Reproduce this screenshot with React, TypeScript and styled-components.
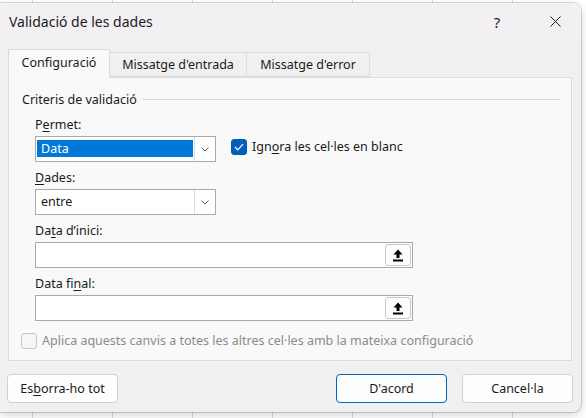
import React from "react";
import styled, { createGlobalStyle } from "styled-components";

const GlobalStyle = createGlobalStyle`
  html, body {
    margin: 0;
    padding: 0;
  }

  body {
    width: 586px;
    height: 418px;
    overflow: hidden;
    background-color: #ffffff;
    background-image: repeating-linear-gradient(
      90deg,
      transparent 0,
      transparent 32px,
      #dcdcdc 32px,
      #dcdcdc 33px,
      transparent 33px,
      transparent 80px
    );
    font-family: "Noto Sans", "Open Sans", sans-serif;
    font-size: 12.5px;
    color: #1a1a1a;
  }
`;

const Dialog = styled.div`
  margin-top: 3px;
  width: 581px;
  height: 409px;
  display: flex;
  flex-direction: column;
  background: #f0f0f0;
  border-radius: 0 8px 8px 0;
  box-shadow: 0 0 0 1px rgba(0, 0, 0, 0.14), 0 3px 10px rgba(0, 0, 0, 0.18);
  overflow: hidden;
`;

const TitleBar = styled.div`
  height: 37px;
  flex-shrink: 0;
  display: flex;
  align-items: center;
  padding-left: 9px;
  background: #f3f0f3;
`;

const Title = styled.div`
  flex: 1;
  font-size: 14px;
  color: #1b1b1b;
`;

const CaptionButton = styled.div<{ $gap?: number }>`
  width: 46px;
  height: 37px;
  margin-right: ${(p) => p.$gap ?? 0}px;
  display: flex;
  align-items: center;
  justify-content: center;
  font-size: 15px;
  color: #1b1b1b;
`;

const Body = styled.div`
  flex: 1;
  display: flex;
  flex-direction: column;
  padding: 9px 9px 0 8px;
`;

const TabRow = styled.div`
  display: flex;
  align-items: flex-end;
  height: 28px;
`;

const Tab = styled.div<{ $active?: boolean; $width: number }>`
  position: relative;
  z-index: ${(p) => (p.$active ? 1 : 0)};
  width: ${(p) => p.$width}px;
  height: ${(p) => (p.$active ? 29 : 25)}px;
  margin-bottom: ${(p) => (p.$active ? -1 : 0)}px;
  margin-left: ${(p) => (p.$active ? 0 : -1)}px;
  box-sizing: border-box;
  display: flex;
  align-items: center;
  justify-content: center;
  padding-bottom: ${(p) => (p.$active ? 3 : 0)}px;
  background: ${(p) => (p.$active ? "#f9f9f9" : "#f0f0f0")};
  border: 1px solid #dcdcdc;
  border-bottom: ${(p) => (p.$active ? "none" : "1px solid #dcdcdc")};
  white-space: nowrap;

  &:first-child {
    margin-left: 0;
  }
`;

const Panel = styled.div`
  height: 284px;
  box-sizing: border-box;
  display: flex;
  flex-direction: column;
  background: #f9f9f9;
  border: 1px solid #dcdcdc;
`;

const GroupHeader = styled.div`
  display: flex;
  align-items: center;
  height: 16px;
  margin: 13px 11px 0 13px;
`;

const GroupRule = styled.div`
  flex: 1;
  height: 1px;
  margin-left: 6px;
  background: #dcdcdc;
`;

const Fields = styled.div`
  display: flex;
  flex-direction: column;
  gap: 8px;
  padding-left: 26px;
  margin-top: 10px;
`;

const Field = styled.div`
  display: flex;
  flex-direction: column;
  gap: 3px;
`;

const Label = styled.div`
  height: 16px;
  line-height: 16px;
  white-space: nowrap;
`;

const Key = styled.span`
  text-decoration: underline;
  text-underline-offset: 2px;
`;

const ControlRow = styled.div`
  display: flex;
  align-items: flex-start;
  gap: 15px;
`;

const Combo = styled.div`
  width: 181px;
  height: 26px;
  box-sizing: border-box;
  display: flex;
  background: #ffffff;
  border: 1px solid #a9a9a9;
`;

const ComboValue = styled.div<{ $selected?: boolean }>`
  flex: 1;
  display: flex;
  align-items: center;
  margin: 3px 1px 4px 1px;
  padding-left: 4px;
  background: ${(p) => (p.$selected ? "#0078d7" : "transparent")};
  color: ${(p) => (p.$selected ? "#ffffff" : "#1a1a1a")};
`;

const DropButton = styled.div`
  width: 20px;
  display: flex;
  align-items: center;
  justify-content: center;
  border-left: 1px solid #dadada;
`;

const TextBox = styled.div`
  width: 378px;
  height: 26px;
  box-sizing: border-box;
  display: flex;
  justify-content: flex-end;
  padding: 1px 1px 1px 0;
  background: #ffffff;
  border: 1px solid #a9a9a9;
`;

const RefButton = styled.div`
  width: 26px;
  box-sizing: border-box;
  display: flex;
  align-items: center;
  justify-content: center;
  background: #fdfdfd;
  border: 1px solid #c9c9c9;
  border-radius: 3px;
`;

const CheckLabel = styled.label<{ $disabled?: boolean }>`
  display: flex;
  align-items: center;
  gap: 5px;
  margin-top: 2px;
  color: ${(p) => (p.$disabled ? "#8b8b8b" : "#1a1a1a")};
  white-space: nowrap;
`;

const Box = styled.span<{ $checked?: boolean }>`
  width: 16px;
  height: 16px;
  box-sizing: border-box;
  display: flex;
  align-items: center;
  justify-content: center;
  border-radius: 3px;
  background: ${(p) => (p.$checked ? "#005fb8" : "#f6f6f6")};
  border: 1px solid ${(p) => (p.$checked ? "#005fb8" : "#c6c6c6")};
`;

const ApplyRow = styled.div`
  margin: 9px 0 0 12px;
`;

const Footer = styled.div`
  display: flex;
  justify-content: space-between;
  margin: 13px -1px 0 -1px;
`;

const ButtonGroup = styled.div`
  display: flex;
  gap: 15px;
`;

const Button = styled.div<{ $primary?: boolean }>`
  width: 111px;
  height: 29px;
  box-sizing: border-box;
  display: flex;
  align-items: center;
  justify-content: center;
  background: #fdfdfd;
  border: 1px solid ${(p) => (p.$primary ? "#0067c0" : "#d1d1d1")};
  border-radius: 4px;
  color: #1a1a1a;
  white-space: nowrap;
`;

function Chevron() {
  return (
    <svg width="8" height="5" viewBox="0 0 8 5">
      <polyline points="0.5,0.5 4,4 7.5,0.5" fill="none" stroke="#5c5c5c" strokeWidth="1" />
    </svg>
  );
}

function CollapseArrow() {
  return (
    <svg width="10" height="13" viewBox="0 0 10 13">
      <path d="M5 0.5 L9.5 5.5 L6.5 5.5 L6.5 9 L3.5 9 L3.5 5.5 L0.5 5.5 Z" fill="#000" />
      <rect x="0" y="10.5" width="10" height="2" fill="#000" />
    </svg>
  );
}

function Tick() {
  return (
    <svg width="10" height="8" viewBox="0 0 10 8">
      <polyline points="1,4 3.8,6.8 9,1.2" fill="none" stroke="#ffffff" strokeWidth="1.2" />
    </svg>
  );
}

function CloseGlyph() {
  return (
    <svg width="11" height="11" viewBox="0 0 11 11">
      <path d="M0.5 0.5 L10.5 10.5 M10.5 0.5 L0.5 10.5" stroke="#1b1b1b" strokeWidth="1" />
    </svg>
  );
}

export default function App() {
  return (
    <>
      <GlobalStyle />
      <Dialog>
        <TitleBar>
          <Title>Validació de les dades</Title>
          <CaptionButton $gap={12}>?</CaptionButton>
          <CaptionButton $gap={3}>
            <CloseGlyph />
          </CaptionButton>
        </TitleBar>

        <Body>
          <TabRow>
            <Tab $active $width={102}>Configuració</Tab>
            <Tab $width={138}>Missatge d'entrada</Tab>
            <Tab $width={124}>Missatge d'error</Tab>
          </TabRow>

          <Panel>
            <GroupHeader>
              <span>Criteris de validació</span>
              <GroupRule />
            </GroupHeader>

            <Fields>
              <Field>
                <Label>
                  P<Key>e</Key>rmet:
                </Label>
                <ControlRow>
                  <Combo>
                    <ComboValue $selected>Data</ComboValue>
                    <DropButton>
                      <Chevron />
                    </DropButton>
                  </Combo>
                  <CheckLabel>
                    <Box $checked>
                      <Tick />
                    </Box>
                    <span>
                      Ign<Key>o</Key>ra les cel·les en blanc
                    </span>
                  </CheckLabel>
                </ControlRow>
              </Field>

              <Field>
                <Label>
                  <Key>D</Key>ades:
                </Label>
                <Combo>
                  <ComboValue>entre</ComboValue>
                  <DropButton>
                    <Chevron />
                  </DropButton>
                </Combo>
              </Field>

              <Field>
                <Label>
                  Da<Key>t</Key>a d’inici:
                </Label>
                <TextBox>
                  <RefButton>
                    <CollapseArrow />
                  </RefButton>
                </TextBox>
              </Field>

              <Field>
                <Label>
                  Data fi<Key>n</Key>al:
                </Label>
                <TextBox>
                  <RefButton>
                    <CollapseArrow />
                  </RefButton>
                </TextBox>
              </Field>
            </Fields>

            <ApplyRow>
              <CheckLabel $disabled>
                <Box />
                <span>Aplica aquests canvis a totes les altres cel·les amb la mateixa configuració</span>
              </CheckLabel>
            </ApplyRow>
          </Panel>

          <Footer>
            <Button>
              Es<Key>b</Key>orra-ho tot
            </Button>
            <ButtonGroup>
              <Button $primary>D'acord</Button>
              <Button>Cancel·la</Button>
            </ButtonGroup>
          </Footer>
        </Body>
      </Dialog>
    </>
  );
}
